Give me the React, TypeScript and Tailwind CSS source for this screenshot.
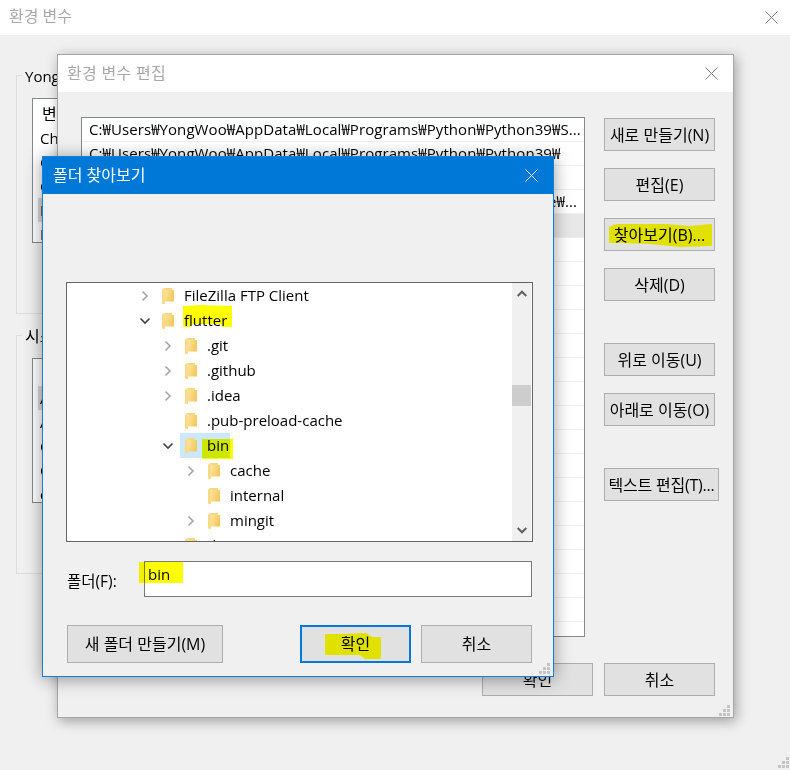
const FONT = "font-['Open_Sans','Noto_Sans_CJK_KR',sans-serif]";

function CloseX({ color }: { color: string }) {
  return (
    <svg width="13" height="13" viewBox="0 0 13 13" fill="none" stroke={color} strokeWidth="1">
      <path d="M0.5 0.5 L12.5 12.5 M12.5 0.5 L0.5 12.5" />
    </svg>
  );
}

function Grip({ className }: { className: string }) {
  const cells = [[8, 0], [4, 4], [8, 4], [0, 8], [4, 8], [8, 8]];
  return (
    <svg className={className} width="11" height="11" viewBox="0 0 11 11" fill="#c4c4c4">
      {cells.map(([x, y]) => (
        <rect key={`${x}-${y}`} x={x} y={y} width="3" height="3" />
      ))}
    </svg>
  );
}

function Btn({ label, className }: { label: string; className: string }) {
  return (
    <div className={`flex items-center justify-center border border-[#adadad] bg-[#e1e1e1] text-[16px] text-black whitespace-nowrap ${className}`}>
      {label}
    </div>
  );
}

function Folder() {
  return (
    <svg width="12" height="16" viewBox="0 0 12 16">
      <defs>
        <linearGradient id="fold" x1="0" x2="1" y1="0" y2="0.4">
          <stop offset="0" stopColor="#ffeeb4" />
          <stop offset="1" stopColor="#f3c95f" />
        </linearGradient>
      </defs>
      <path d="M2 0 H10 V2 H12 V13.5 H3 V16 H1 L0 15 V2 Z" fill="url(#fold)" />
      <path d="M0 2 L2.5 0 V14 L1 16 L0 15 Z" fill="#f8d988" />
      <path d="M2.5 0 H10 V2 H4 Z" fill="#f6d67e" />
    </svg>
  );
}

function Chevron({ open }: { open: boolean }) {
  return (
    <svg width="12" height="12" viewBox="0 0 12 12" fill="none" strokeWidth="1.6" stroke={open ? "#404040" : "#a6a6a6"}>
      {open ? <path d="M1.5 3.5 L6 8 L10.5 3.5" /> : <path d="M3.5 1.5 L8 6 L3.5 10.5" />}
    </svg>
  );
}

const DEPTH = ["pl-[72px]", "pl-[95px]", "pl-[118px]"];
const TREE = [
  { t: "FileZilla FTP Client", d: 0, c: "closed" },
  { t: "flutter", d: 0, c: "open" },
  { t: ".git", d: 1, c: "closed" },
  { t: ".github", d: 1, c: "closed" },
  { t: ".idea", d: 1, c: "closed" },
  { t: ".pub-preload-cache", d: 1, c: "none" },
  { t: "bin", d: 1, c: "open", sel: true },
  { t: "cache", d: 2, c: "closed" },
  { t: "internal", d: 2, c: "none" },
  { t: "mingit", d: 2, c: "closed" },
  { t: "dev", d: 1, c: "closed" },
];

function Tree() {
  return (
    <div className="flex h-[260px] w-[467px] border border-[#646464] bg-white">
      <div className="flex-1 overflow-hidden">
        {TREE.map((r) => (
          <div key={r.t} className={`flex h-[25px] shrink-0 items-center text-[15px] text-black ${DEPTH[r.d]}`}>
            <div className="flex w-[12px] shrink-0 justify-center">
              {r.c !== "none" && <Chevron open={r.c === "open"} />}
            </div>
            <div className={`ml-[6px] flex h-[25px] items-center ${r.sel ? "bg-[#cce8ff] pr-[1px]" : ""}`}>
              <div className="flex h-[25px] items-center pl-[5px]">
                <Folder />
                <span className="ml-[10px] whitespace-nowrap">{r.t}</span>
              </div>
            </div>
          </div>
        ))}
      </div>
      <div className="mr-[1px] flex w-[19px] flex-col items-center bg-[#f0f0f0]">
        <div className="flex h-[20px] items-center justify-center pt-[1px]">
          <svg width="10" height="7" viewBox="0 0 10 7" fill="none" stroke="#606060" strokeWidth="2"><path d="M0.7 6 L5 1.7 L9.3 6" /></svg>
        </div>
        <div className="mt-[82px] h-[21px] w-[19px] bg-[#cdcdcd]" />
        <div className="mt-auto flex h-[20px] items-center justify-center pb-[1px]">
          <svg width="10" height="7" viewBox="0 0 10 7" fill="none" stroke="#606060" strokeWidth="2"><path d="M0.7 1 L5 5.3 L9.3 1" /></svg>
        </div>
      </div>
    </div>
  );
}

function VarList({ rows, selected }: { rows: string[]; selected: number }) {
  return (
    <div className="h-[145px] w-[560px] overflow-hidden border border-[#828790] bg-white pl-[5px]">
      <div className="flex h-[27px] items-center pl-[4px] pt-[2px] text-[16px] text-black">변수</div>
      {rows.map((r, i) => (
        <div key={r} className={`flex h-[24px] items-center pl-[2px] text-[15px] text-black ${i === selected ? "bg-[#d9d9d9]" : ""}`}>
          {r}
        </div>
      ))}
    </div>
  );
}

function Group({ title, children, size }: { title: string; children: React.ReactNode; size: string }) {
  return (
    <div className="relative h-[239px] w-[600px] border border-[#dcdcdc] pl-[15px] pt-[22px]">
      <div className={`absolute left-[5px] top-[-11px] bg-[#f0f0f0] px-[3px] leading-[22px] text-black whitespace-nowrap ${size}`}>{title}</div>
      {children}
    </div>
  );
}

const PATHS = [
  "C:₩Users₩YongWoo₩AppData₩Local₩Programs₩Python₩Python39₩S...",
  "C:₩Users₩YongWoo₩AppData₩Local₩Programs₩Python₩Python39₩",
  "C:₩Program Files₩Git₩cmd",
  "C:₩Users₩YongWoo₩AppData₩Local₩Programs₩Microsoft VS Code₩...",
];

function Highlights() {
  return (
    <svg className="pointer-events-none absolute inset-0 mix-blend-multiply" width="790" height="770" viewBox="0 0 790 770" fill="#ffff00">
      <polygon points="609,227 616,224 665,224 690,226 712,224 712,246 680,247 650,244 620,243 609,243" />
      <polygon points="183,306 200,305 232,306 232,327 222,327 221,324 192,324 191,327 183,327" />
      <polygon points="202,439 233,439 233,459 202,459" />
      <polygon points="139,562 183,562 183,583 139,583" />
      <polygon points="325,634 340,634 366,633 372,637 381,637 381,659 365,659 360,655 325,655" />
    </svg>
  );
}

export default function App() {
  return (
    <div className={`relative h-[770px] w-[790px] overflow-hidden bg-[#f0f0f0] ${FONT}`}>
      {/* back window */}
      <div className="flex h-[35px] items-center justify-between bg-white pl-[9px] pr-[12px] text-[16px] text-[#a8a8a8]">
        <span className="mb-[3px]">환경 변수</span>
        <CloseX color="#808080" />
      </div>
      <div className="flex flex-col gap-[21px] pl-[16px] pt-[40px]">
        <Group title="YongWoo에 대한 사용자 변수" size="text-[15px]">
          <VarList selected={3} rows={["ChocolateyLastPathUpdate", "OneDrive", "OneDriveConsumer", "Path", "PyCharm"]} />
        </Group>
        <Group title="시스템 변수" size="text-[16px]">
          <VarList selected={0} rows={["ACSetupSvcPort", "ACSvcPort", "ChocolateyInstall", "ComSpec", "configsetroot"]} />
        </Group>
      </div>
      <Grip className="absolute left-[778px] top-[757px]" />

      {/* edit window */}
      <div className="absolute left-[57px] top-[54px] flex h-[664px] w-[677px] flex-col border border-[#a6a6a6] bg-[#f0f0f0] shadow-[2px_3px_12px_rgba(0,0,0,0.35)]">
        <div className="flex h-[37px] shrink-0 items-center justify-between bg-white pl-[9px] pr-[15px] text-[16px] tracking-[0.3px] text-[#a8a8a8]">
          <span className="mb-[1px]">환경 변수 편집</span>
          <CloseX color="#808080" />
        </div>
        <div className="flex pl-[23px] pt-[25px]">
          <div className="h-[520px] w-[504px] overflow-hidden border border-[#828790] bg-white">
            {Array.from({ length: 22 }).map((_, i) => (
              <div key={i} className={`flex h-[24px] items-center border-b border-[#efefef] px-[7px] text-[15px] tracking-[0.08px] text-black whitespace-nowrap ${i === 3 ? "justify-end" : ""} ${i === 4 ? "bg-[#e8e8e8]" : ""}`}>
                {PATHS[i] ?? ""}
              </div>
            ))}
          </div>
          <div className="ml-[19px] flex flex-col pt-[1px]">
            <Btn label="새로 만들기(N)" className="h-[33px] w-[111px]" />
            <Btn label="편집(E)" className="mt-[17px] h-[33px] w-[111px]" />
            <Btn label="찾아보기(B)..." className="mt-[17px] h-[33px] w-[111px]" />
            <Btn label="삭제(D)" className="mt-[17px] h-[33px] w-[111px]" />
            <Btn label="위로 이동(U)" className="mt-[42px] h-[33px] w-[111px]" />
            <Btn label="아래로 이동(O)" className="mt-[17px] h-[33px] w-[111px]" />
            <Btn label="텍스트 편집(T)..." className="mt-[42px] h-[33px] w-[115px] tracking-[-0.2px]" />
          </div>
        </div>
        <div className="flex justify-end gap-[11px] pr-[18px] pt-[26px]">
          <Btn label="확인" className="h-[33px] w-[111px]" />
          <Btn label="취소" className="h-[33px] w-[111px]" />
        </div>
        <Grip className="absolute right-[3px] bottom-[1px]" />
      </div>

      {/* folder dialog */}
      <div className="absolute left-[42px] top-[156px] flex h-[521px] w-[512px] flex-col border border-[#0f82e0] bg-[#f0f0f0] shadow-[0_2px_16px_rgba(0,0,0,0.4)]">
        <div className="flex h-[37px] shrink-0 items-center justify-between bg-[#0078d7] pl-[10px] pr-[15px] text-[16px] text-white">
          <span className="mb-[1px]">폴더 찾아보기</span>
          <CloseX color="#ffffff" />
        </div>
        <div className="flex flex-col pl-[23px] pt-[88px]">
          <Tree />
          <div className="mt-[19px] flex items-center">
            <span className="w-[78px] pl-[1px] pt-[6px] text-[15.5px] text-black">폴더(F):</span>
            <div className="h-[36px] w-[388px] border border-[#7a7a7a] bg-white pl-[3px] text-[15px] leading-[24px] text-black">bin</div>
          </div>
          <div className="mt-[28px] flex">
            <Btn label="새 폴더 만들기(M)" className="ml-[1px] h-[38px] w-[156px]" />
            <Btn label="확인" className="ml-[77px] h-[38px] w-[111px] !border-2 !border-[#0078d7]" />
            <Btn label="취소" className="ml-[10px] h-[38px] w-[111px]" />
          </div>
        </div>
        <Grip className="absolute right-[3px] bottom-[2px]" />
      </div>

      <Highlights />
    </div>
  );
}
